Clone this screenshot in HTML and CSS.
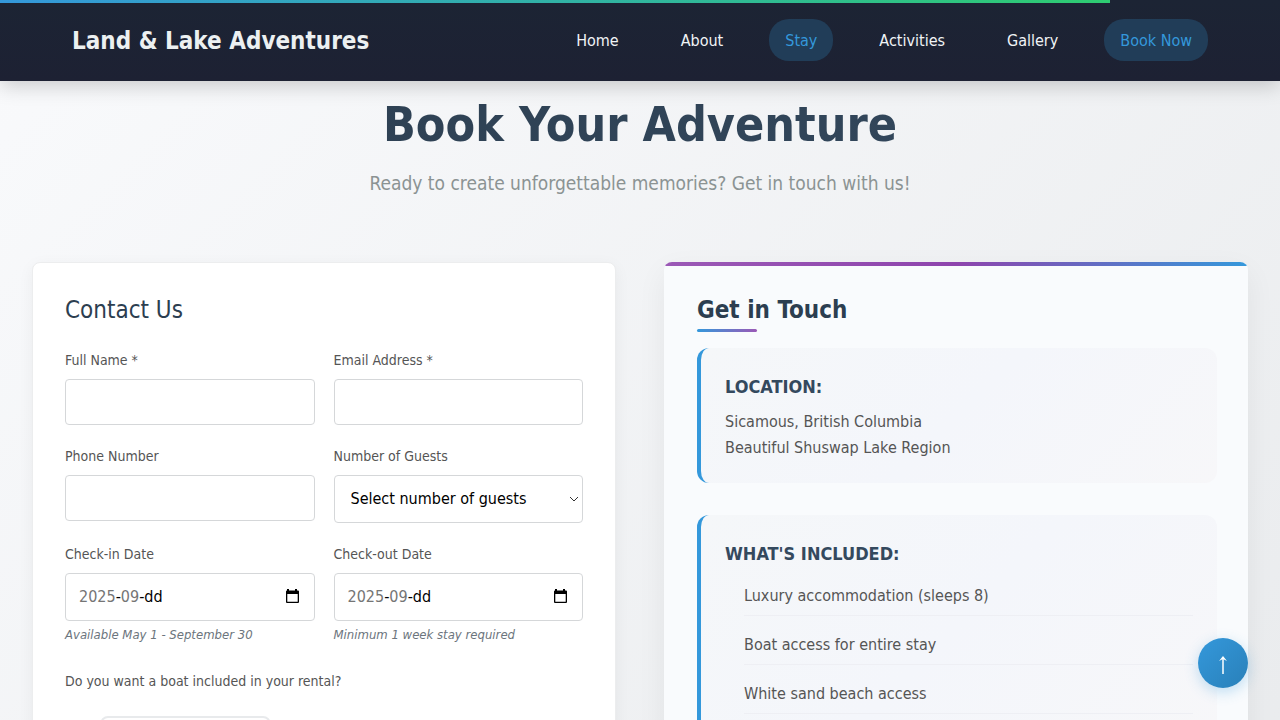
FILE: index.html
```html
<!DOCTYPE html>
<html lang="en">
<head>
<meta charset="utf-8">
<meta name="viewport" content="width=device-width, initial-scale=1">
<title>Land &amp; Lake Adventures</title>
<link rel="stylesheet" href="styles.css">
</head>
<body>
<div class="progress"></div>
<header class="header">
  <div class="header-inner">
    <a class="brand" href="#">Land &amp; Lake Adventures</a>
    <nav class="nav">
      <a class="nav-link" href="#">Home</a>
      <a class="nav-link" href="#">About</a>
      <a class="nav-link active" href="#">Stay</a>
      <a class="nav-link" href="#">Activities</a>
      <a class="nav-link" href="#">Gallery</a>
      <a class="nav-link active" href="#">Book Now</a>
    </nav>
  </div>
</header>
<main class="main">
  <div class="intro">
    <h1 class="title">Book Your Adventure</h1>
    <p class="subtitle">Ready to create unforgettable memories? Get in touch with us!</p>
  </div>
  <div class="columns">
    <form class="card form-card">
      <h2 class="form-title">Contact Us</h2>
      <div class="fields">
        <div class="field">
          <label class="label" for="name">Full Name *</label>
          <input class="control" id="name" type="text">
        </div>
        <div class="field">
          <label class="label" for="email">Email Address *</label>
          <input class="control" id="email" type="email">
        </div>
        <div class="field">
          <label class="label" for="phone">Phone Number</label>
          <input class="control" id="phone" type="tel">
        </div>
        <div class="field">
          <label class="label" for="guests">Number of Guests</label>
          <select class="control select" id="guests"><option>Select number of guests</option></select>
        </div>
        <div class="field">
          <label class="label" for="in-year">Check-in Date</label>
          <div class="control date">
            <input class="part year" id="in-year" type="text" value="2025"><span>-</span><input class="part" type="text" value="09" aria-label="Check-in month"><span>-</span><input class="part day" type="text" value="dd" aria-label="Check-in day">
            <button class="picker" type="button" aria-label="Pick check-in date"><svg width="16" height="16" viewBox="0 0 16 16"><path d="M3 0h2v1.500h6V0h2v1.500h1a1 1 0 0 1 1 1V13a1 1 0 0 1-1 1H3a1 1 0 0 1-1-1V2.500a1 1 0 0 1 1-1zM3.300 5v7.700h10.400V5z" fill-rule="evenodd"/></svg></button>
          </div>
          <small class="hint">Available May 1 - September 30</small>
        </div>
        <div class="field">
          <label class="label" for="out-year">Check-out Date</label>
          <div class="control date">
            <input class="part year" id="out-year" type="text" value="2025"><span>-</span><input class="part" type="text" value="09" aria-label="Check-out month"><span>-</span><input class="part day" type="text" value="dd" aria-label="Check-out day">
            <button class="picker" type="button" aria-label="Pick check-out date"><svg width="16" height="16" viewBox="0 0 16 16"><path d="M3 0h2v1.500h6V0h2v1.500h1a1 1 0 0 1 1 1V13a1 1 0 0 1-1 1H3a1 1 0 0 1-1-1V2.500a1 1 0 0 1 1-1zM3.300 5v7.700h10.400V5z" fill-rule="evenodd"/></svg></button>
          </div>
          <small class="hint">Minimum 1 week stay required</small>
        </div>
      </div>
      <fieldset class="boat">
        <legend class="label">Do you want a boat included in your rental?</legend>
        <label class="option"><input type="radio" name="boat" aria-label="Yes"></label>
      </fieldset>
    </form>
    <section class="card info-card">
      <h2 class="info-title">Get in Touch</h2>
      <div class="info-box">
        <h3 class="info-heading">LOCATION:</h3>
        <p class="info-text">Sicamous, British Columbia<br>Beautiful Shuswap Lake Region</p>
      </div>
      <div class="info-box">
        <h3 class="info-heading">WHAT'S INCLUDED:</h3>
        <ul class="included">
          <li class="included-item">Luxury accommodation (sleeps 8)</li>
          <li class="included-item">Boat access for entire stay</li>
          <li class="included-item">White sand beach access</li>
        </ul>
      </div>
    </section>
  </div>
</main>
<button class="to-top" type="button" aria-label="Back to top"><svg width="10" height="20" viewBox="0 0 10 20" fill="none" stroke="currentColor" stroke-width="1.500"><path d="M5 19V3"/><path d="M1 6 5 1l4 5-4-2z" fill="currentColor" stroke="none"/></svg></button>
</body>
</html>
```
FILE: styles.css
```css
* { box-sizing: border-box; }

html { scrollbar-width: none; }

body {
  margin: 0;
  font-family: Tahoma, "DejaVu Sans Condensed", "Noto Sans", sans-serif;
  font-size: 16px;
  line-height: 26px;
  color: #555;
  background: linear-gradient(135deg, #f9fafc 0%, #e9ebed 100%);
}

h1, h2, h3, p, ul { margin: 0; }

.progress {
  position: fixed;
  top: 0;
  left: 0;
  z-index: 3;
  width: 86.75%;
  height: 3px;
  background: linear-gradient(90deg, #3498db, #2ecc71);
}

.header {
  position: sticky;
  top: 0;
  z-index: 2;
  background: linear-gradient(180deg, #1c2434, #1d2133);
  box-shadow: 0 4px 20px rgba(0, 0, 0, 0.2);
}

.header-inner {
  display: flex;
  align-items: center;
  justify-content: space-between;
  max-width: 1200px;
  margin: 0 auto;
  padding: 19px 32px 20px;
}

.brand {
  padding-top: 2px;
  font-size: 24px;
  font-weight: bold;
  color: #ecf0f1;
  text-decoration: none;
}

.nav { display: flex; gap: 30px; }

.nav-link {
  padding: 9px 16px 7px;
  border-radius: 20px;
  color: #f1f4f6;
  text-decoration: none;
}

.nav-link.active { color: #3498db; background: #213d58; }

.main { padding: 7px 32px 32px; }

.intro { text-align: center; padding-bottom: 64px; }

.title {
  font-size: 48px;
  line-height: 72px;
  color: #34495e;
  background: linear-gradient(135deg, #2c3e50, #34495e);
  background-clip: text;
  -webkit-text-fill-color: transparent;
}

.subtitle {
  padding-top: 8px;
  font-size: 19px;
  line-height: 30px;
  color: #8b9393;
}

.columns {
  display: grid;
  grid-template-columns: 1fr 1fr;
  gap: 48px;
}

.card { border-radius: 8px; padding: 32px; }

.form-card {
  border: 1px solid #ecedee;
  background: #fff;
  box-shadow: 0 4px 16px rgba(0, 0, 0, 0.05);
}

.form-title {
  font-size: 24px;
  line-height: 30px;
  font-weight: normal;
  color: #2c3e50;
}

.fields {
  display: grid;
  grid-template-columns: 1fr 1fr;
  gap: 19px;
  padding-top: 23px;
}

.field { display: flex; flex-direction: column; }

.label {
  padding: 0 0 7px;
  font-size: 14px;
  line-height: 24px;
  color: #555;
}

.control {
  width: 100%;
  height: 46px;
  padding: 0 13px;
  border: 1px solid #d5d7d9;
  border-radius: 4px;
  background: #fff;
  color: #000;
  font: inherit;
}

.select {
  height: 48px;
  padding: 0 16px;
  appearance: none;
  background: #fff url("data:image/svg+xml,%3Csvg xmlns='http://www.w3.org/2000/svg' width='10' height='6' fill='none' stroke='%23333'%3E%3Cpath d='M1 1l4 4 4-4'/%3E%3C/svg%3E") no-repeat right 3px center;
}

.date { display: flex; align-items: center; height: 48px; }

.part {
  width: 2ch;
  padding: 0;
  border: 0;
  background: none;
  color: #757575;
  font: inherit;
}

.year { width: 4ch; }

.part.day { color: #000; }

.picker {
  display: flex;
  margin-left: auto;
  padding: 0 1px;
  border: 0;
  background: none;
}

.hint {
  padding-top: 3px;
  font-size: 13px;
  line-height: 22px;
  font-style: italic;
  color: #6c757d;
}

.boat {
  margin: 0;
  padding: 23px 0 0;
  border: 0;
}

.boat .label { float: left; width: 100%; padding-bottom: 23px; }

.option {
  display: block;
  clear: both;
  width: 33%;
  margin-left: 35px;
  padding: 16px;
  border: 2px solid #e8eaec;
  border-radius: 8px;
}

.info-card {
  position: relative;
  overflow: hidden;
  padding: 32px 31px 32px 33px;
  background: #f9fbfd;
  box-shadow: 0 10px 30px rgba(0, 0, 0, 0.06);
}

.info-card::before {
  content: "";
  position: absolute;
  inset: 0 0 auto;
  height: 4px;
  background: linear-gradient(90deg, #9b59b6, #8e44ad 50%, #3498db);
}

.info-title {
  font-size: 24px;
  line-height: 32px;
  color: #2c3e50;
}

.info-title::after {
  content: "";
  display: block;
  width: 60px;
  height: 3px;
  margin: 3px 0 16px;
  border-radius: 2px;
  background: linear-gradient(90deg, #3498db, #9b59b6);
}

.info-box {
  margin-bottom: 32px;
  padding: 24px 24px 22px;
  border-left: 4px solid #3498db;
  border-radius: 12px;
  background: linear-gradient(135deg, #f5f7f9, #f4f6fb 50%, #f7f7f9);
}

.info-heading {
  padding-bottom: 7px;
  font-size: 18px;
  line-height: 30px;
  color: #34495e;
}

.included {
  display: grid;
  gap: 10px;
  padding: 1px 0 0 19px;
  list-style: none;
}

.included-item { padding: 6px 0; border-bottom: 1px solid #eeeff4; }

.to-top {
  position: fixed;
  right: 32px;
  bottom: 32px;
  display: grid;
  place-items: center;
  width: 50px;
  height: 50px;
  padding: 4px 0 0;
  border: 0;
  border-radius: 50%;
  color: #fff;
  background: linear-gradient(135deg, #3498db, #2980b9);
  box-shadow: 0 4px 14px rgba(52, 152, 219, 0.3);
}
```
